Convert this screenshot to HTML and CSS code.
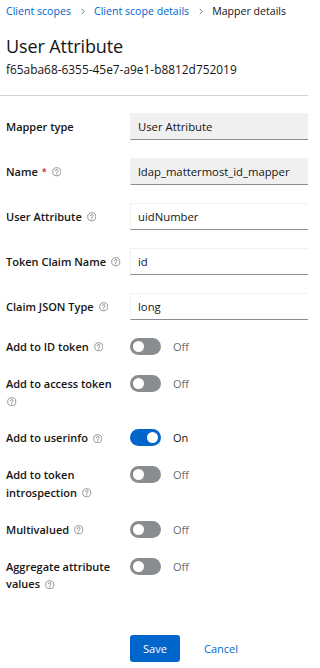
FILE: index.html
```html
<!DOCTYPE html>
<html lang="en">
<head>
<meta charset="utf-8">
<title>Mapper details</title>
<link rel="stylesheet" href="styles.css">
</head>
<body>
<div class="page">
  <header class="header">
    <nav class="breadcrumb">
      <a class="crumb-link" href="#">Client scopes</a>
      <svg class="crumb-sep" viewBox="0 0 6 10" width="5" height="8"><path d="M1 1l4 4-4 4" fill="none" stroke="currentColor" stroke-width="1.4"/></svg>
      <a class="crumb-link" href="#">Client scope details</a>
      <svg class="crumb-sep" viewBox="0 0 6 10" width="5" height="8"><path d="M1 1l4 4-4 4" fill="none" stroke="currentColor" stroke-width="1.4"/></svg>
      <span class="crumb-current">Mapper details</span>
    </nav>
    <h1 class="title">User Attribute</h1>
    <div class="subtitle">f65aba68-6355-45e7-a9e1-b8812d752019</div>
  </header>

  <form class="form">
    <div class="input-rows">
      <div class="row">
        <label class="label">Mapper type</label>
        <div class="input readonly">User Attribute</div>
      </div>
      <div class="row">
        <label class="label">Name <span class="req">*</span><svg class="help" viewBox="0 0 16 16"><circle cx="8" cy="8" r="6.8" fill="none" stroke="currentColor" stroke-width="1.2"/><path d="M5.9 6.3a2.1 2.1 0 1 1 3 1.9c-.6.3-.9.7-.9 1.3v.4" fill="none" stroke="currentColor" stroke-width="1.3" stroke-linecap="round"/><circle cx="8" cy="11.8" r=".85" fill="currentColor"/></svg></label>
        <div class="input readonly">ldap_mattermost_id_mapper</div>
      </div>
      <div class="row">
        <label class="label">User Attribute<svg class="help" viewBox="0 0 16 16"><circle cx="8" cy="8" r="6.8" fill="none" stroke="currentColor" stroke-width="1.2"/><path d="M5.9 6.3a2.1 2.1 0 1 1 3 1.9c-.6.3-.9.7-.9 1.3v.4" fill="none" stroke="currentColor" stroke-width="1.3" stroke-linecap="round"/><circle cx="8" cy="11.8" r=".85" fill="currentColor"/></svg></label>
        <div class="input">uidNumber</div>
      </div>
      <div class="row">
        <label class="label">Token Claim Name<svg class="help" viewBox="0 0 16 16"><circle cx="8" cy="8" r="6.8" fill="none" stroke="currentColor" stroke-width="1.2"/><path d="M5.9 6.3a2.1 2.1 0 1 1 3 1.9c-.6.3-.9.7-.9 1.3v.4" fill="none" stroke="currentColor" stroke-width="1.3" stroke-linecap="round"/><circle cx="8" cy="11.8" r=".85" fill="currentColor"/></svg></label>
        <div class="input">id</div>
      </div>
      <div class="row">
        <label class="label">Claim JSON Type<svg class="help" viewBox="0 0 16 16"><circle cx="8" cy="8" r="6.8" fill="none" stroke="currentColor" stroke-width="1.2"/><path d="M5.9 6.3a2.1 2.1 0 1 1 3 1.9c-.6.3-.9.7-.9 1.3v.4" fill="none" stroke="currentColor" stroke-width="1.3" stroke-linecap="round"/><circle cx="8" cy="11.8" r=".85" fill="currentColor"/></svg></label>
        <div class="input">long</div>
      </div>
    </div>

    <div class="toggle-rows">
      <div class="trow">
        <label class="label">Add to ID token<svg class="help" viewBox="0 0 16 16"><circle cx="8" cy="8" r="6.8" fill="none" stroke="currentColor" stroke-width="1.2"/><path d="M5.9 6.3a2.1 2.1 0 1 1 3 1.9c-.6.3-.9.7-.9 1.3v.4" fill="none" stroke="currentColor" stroke-width="1.3" stroke-linecap="round"/><circle cx="8" cy="11.8" r=".85" fill="currentColor"/></svg></label>
        <div class="switch"><span class="track"><span class="knob"></span></span><span class="state">Off</span></div>
      </div>
      <div class="trow">
        <label class="label">Add to access token<br><svg class="help first" viewBox="0 0 16 16"><circle cx="8" cy="8" r="6.8" fill="none" stroke="currentColor" stroke-width="1.2"/><path d="M5.9 6.3a2.1 2.1 0 1 1 3 1.9c-.6.3-.9.7-.9 1.3v.4" fill="none" stroke="currentColor" stroke-width="1.3" stroke-linecap="round"/><circle cx="8" cy="11.8" r=".85" fill="currentColor"/></svg></label>
        <div class="switch"><span class="track"><span class="knob"></span></span><span class="state">Off</span></div>
      </div>
      <div class="trow">
        <label class="label">Add to userinfo<svg class="help" viewBox="0 0 16 16"><circle cx="8" cy="8" r="6.8" fill="none" stroke="currentColor" stroke-width="1.2"/><path d="M5.9 6.3a2.1 2.1 0 1 1 3 1.9c-.6.3-.9.7-.9 1.3v.4" fill="none" stroke="currentColor" stroke-width="1.3" stroke-linecap="round"/><circle cx="8" cy="11.8" r=".85" fill="currentColor"/></svg></label>
        <div class="switch on"><span class="track"><span class="knob"></span></span><span class="state">On</span></div>
      </div>
      <div class="trow">
        <label class="label">Add to token<br>introspection<svg class="help" viewBox="0 0 16 16"><circle cx="8" cy="8" r="6.8" fill="none" stroke="currentColor" stroke-width="1.2"/><path d="M5.9 6.3a2.1 2.1 0 1 1 3 1.9c-.6.3-.9.7-.9 1.3v.4" fill="none" stroke="currentColor" stroke-width="1.3" stroke-linecap="round"/><circle cx="8" cy="11.8" r=".85" fill="currentColor"/></svg></label>
        <div class="switch"><span class="track"><span class="knob"></span></span><span class="state">Off</span></div>
      </div>
      <div class="trow">
        <label class="label">Multivalued<svg class="help" viewBox="0 0 16 16"><circle cx="8" cy="8" r="6.8" fill="none" stroke="currentColor" stroke-width="1.2"/><path d="M5.9 6.3a2.1 2.1 0 1 1 3 1.9c-.6.3-.9.7-.9 1.3v.4" fill="none" stroke="currentColor" stroke-width="1.3" stroke-linecap="round"/><circle cx="8" cy="11.8" r=".85" fill="currentColor"/></svg></label>
        <div class="switch"><span class="track"><span class="knob"></span></span><span class="state">Off</span></div>
      </div>
      <div class="trow">
        <label class="label">Aggregate attribute<br>values<svg class="help" viewBox="0 0 16 16"><circle cx="8" cy="8" r="6.8" fill="none" stroke="currentColor" stroke-width="1.2"/><path d="M5.9 6.3a2.1 2.1 0 1 1 3 1.9c-.6.3-.9.7-.9 1.3v.4" fill="none" stroke="currentColor" stroke-width="1.3" stroke-linecap="round"/><circle cx="8" cy="11.8" r=".85" fill="currentColor"/></svg></label>
        <div class="switch"><span class="track"><span class="knob"></span></span><span class="state">Off</span></div>
      </div>
    </div>

    <div class="actions">
      <button type="button" class="btn-primary">Save</button>
      <button type="button" class="btn-link">Cancel</button>
    </div>
  </form>
</div>
</body>
</html>
```

FILE: styles.css
```css
html, body {
  margin: 0;
  padding: 0;
  background: #ffffff;
  overflow: hidden;
}

body {
  font-family: "Open Sans", "Noto Sans", sans-serif;
  font-size: 11px;
  color: #151515;
}

.page {
  width: 308px;
}

.header {
  padding: 4px 6px 19px;
  border-bottom: 1px solid #d2d2d2;
}

.breadcrumb {
  display: flex;
  align-items: center;
  height: 14px;
  line-height: 14px;
  font-size: 10.6px;
  white-space: nowrap;
}

.crumb-link {
  color: #0066cc;
  text-decoration: none;
}

.crumb-sep {
  color: #6a6e73;
  margin: 0 9px 0 10px;
  width: 4px;
  height: 7px;
}

.crumb-current {
  color: #151515;
}

.title {
  margin: 16px 0 0;
  font-size: 18px;
  font-weight: 400;
  line-height: 24px;
  letter-spacing: -0.1px;
}

.subtitle {
  margin-top: 4px;
  font-size: 11.9px;
  line-height: 14px;
  white-space: nowrap;
}

.form {
  padding: 17px 0 0 6px;
}

.input-rows {
  display: flex;
  flex-direction: column;
  gap: 18px;
}

.row {
  display: grid;
  grid-template-columns: 124px 1fr;
  align-items: center;
}

.label {
  font-weight: 600;
  line-height: 17.5px;
  white-space: nowrap;
}

.req {
  color: #c9190b;
  font-size: 9px;
  margin-left: 1px;
  vertical-align: 1px;
}

.help {
  width: 9.5px;
  height: 9.5px;
  color: #6a6e73;
  margin-left: 5px;
  vertical-align: -1px;
}

.help.first {
  margin-left: 1px;
}

.input {
  box-sizing: border-box;
  height: 27px;
  line-height: 26px;
  padding: 0 7px;
  font-size: 11.3px;
  background: #ffffff;
  border-top: 1px solid #f0f0f0;
  border-left: 1px solid #f0f0f0;
  border-bottom: 1px solid #8a8d90;
  white-space: nowrap;
  overflow: hidden;
}

.input.readonly {
  background: #f0f0f0;
  border-color: #f0f0f0;
  border-bottom-color: #8a8d90;
}

.toggle-rows {
  display: flex;
  flex-direction: column;
  gap: 19.5px;
  margin-top: 17.5px;
}

.trow {
  display: grid;
  grid-template-columns: 124px 1fr;
  align-items: start;
}

.switch {
  display: flex;
  align-items: center;
  height: 17.5px;
}

.track {
  position: relative;
  display: block;
  width: 31px;
  height: 17px;
  border-radius: 9px;
  background: #8a8d90;
}

.knob {
  position: absolute;
  top: 3px;
  left: 3px;
  width: 11px;
  height: 11px;
  border-radius: 50%;
  background: #ffffff;
}

.switch.on .track {
  background: #0066cc;
}

.switch.on .knob {
  left: auto;
  right: 3px;
}

.state {
  margin-left: 12px;
  color: #6a6e73;
}

.switch.on .state {
  color: #151515;
}

.actions {
  display: flex;
  align-items: center;
  margin-top: 42.5px;
  padding-left: 124px;
}

.btn-primary {
  font-family: inherit;
  font-size: 11px;
  height: 27px;
  width: 50px;
  border: none;
  border-radius: 3px;
  background: #0066cc;
  color: #ffffff;
  padding: 0;
}

.btn-link {
  font-family: inherit;
  font-size: 11px;
  border: none;
  background: none;
  color: #0066cc;
  padding: 0;
  margin-left: 24px;
}
```
